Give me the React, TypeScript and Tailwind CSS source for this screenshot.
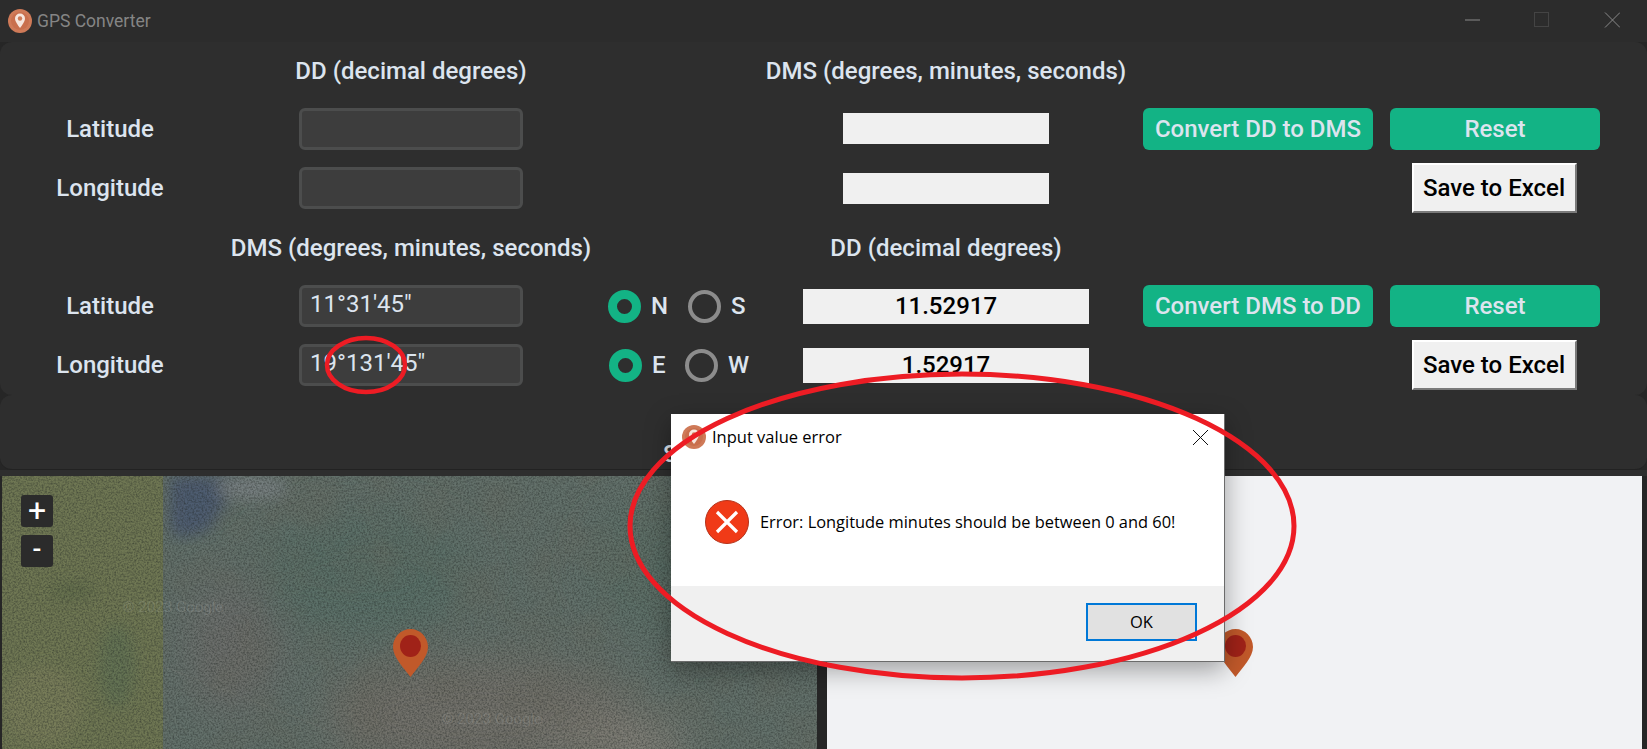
const rowCols =
  "grid grid-cols-[220px_382px_201px_286px_284px_227px] grid-rows-[30px_22px_42px_17px_42px] items-center";

function AppLogo({ className }: { className: string }) {
  return (
    <svg viewBox="0 0 24 24" className={className}>
      <circle cx="12" cy="12" r="12" fill="#cf7a58" />
      <circle cx="12" cy="12" r="9" fill="#c96f4d" />
      <path d="M12 4.5a5 5 0 0 0-5 5c0 3.6 5 9.5 5 9.5s5-5.9 5-9.5a5 5 0 0 0-5-5z" fill="#f6e6de" />
      <circle cx="12" cy="9.5" r="2.2" fill="#cf7a58" />
    </svg>
  );
}

function MapPin() {
  return (
    <svg viewBox="0 0 35 48" className="w-[35px] h-[48px]">
      <path d="M17.5 0C8 0 0 8 0 18c0 10 10 20 17.5 30C25 38 35 28 35 18 35 8 27 0 17.5 0z" fill="#c1592a" />
      <ellipse cx="17.5" cy="17" rx="10.5" ry="11" fill="#a02218" />
    </svg>
  );
}

function Heading({ children }: { children: string }) {
  return (
    <div className="flex justify-center whitespace-nowrap text-[24px] leading-[30px] font-medium text-[#dce4ee]">
      {children}
    </div>
  );
}

function Label({ children }: { children: string }) {
  return <div className="text-center text-[24px] font-medium text-[#dce4ee]">{children}</div>;
}

function Field({ value }: { value?: string }) {
  return (
    <div className="mx-auto w-[224px] h-[42px] rounded-md border-[3px] border-[#4c4d4d] bg-[#3d3d3d] pl-[8px] text-[24px] leading-[33px] text-[#dce4ee]">
      {value}
    </div>
  );
}

function GreenButton({ children, className }: { children: string; className: string }) {
  return (
    <button className={`block h-[42px] rounded-md bg-[#13b385] text-[24px] font-medium text-[#dce4ee] ${className}`}>
      {children}
    </button>
  );
}

function SaveButton() {
  return (
    <button className="mx-auto block w-[165px] h-[50px] bg-[#f0f0f0] border-2 border-t-white border-l-white border-r-[#7a7a7a] border-b-[#7a7a7a] text-[24px] font-medium text-black whitespace-nowrap">
      Save to Excel
    </button>
  );
}

function Radio({ label, on, className }: { label: string; on?: boolean; className: string }) {
  return (
    <div className={`flex items-center gap-[10px] ${className}`}>
      <span
        className={
          on
            ? "w-[33px] h-[33px] rounded-full border-[9.5px] border-[#13b385]"
            : "w-[33px] h-[33px] rounded-full border-[4px] border-[#8c8c8c]"
        }
      />
      <span className="text-[24px] font-medium text-[#dce4ee]">{label}</span>
    </div>
  );
}

function Satellite() {
  return (
    <svg viewBox="0 0 815 273" preserveAspectRatio="none" className="w-full h-full">
      <defs>
        <filter id="grain" x="0" y="0" width="100%" height="100%" colorInterpolationFilters="sRGB">
          <feTurbulence type="fractalNoise" baseFrequency="0.55" numOctaves="3" seed="8" />
          <feColorMatrix values="0 0 0 0 0.12  0 0 0 0 0.14  0 0 0 0 0.13  0 0 0 0.9 -0.32" />
        </filter>
        <filter id="mottle" x="0" y="0" width="100%" height="100%" colorInterpolationFilters="sRGB">
          <feTurbulence type="fractalNoise" baseFrequency="0.018" numOctaves="3" seed="21" />
          <feColorMatrix values="0 0 0 0 0.42  0 0 0 0 0.42  0 0 0 0 0.38  0 0 0 1.6 -0.62" />
        </filter>
        <filter id="soft">
          <feGaussianBlur stdDeviation="22" />
        </filter>
        <filter id="soft2">
          <feGaussianBlur stdDeviation="7" />
        </filter>
      </defs>
      <rect width="815" height="273" fill="#63716b" />
      <g filter="url(#soft)">
        <ellipse cx="480" cy="240" rx="160" ry="60" fill="#72716a" />
        <ellipse cx="700" cy="90" rx="110" ry="70" fill="#5b7067" />
        <ellipse cx="360" cy="100" rx="110" ry="60" fill="#5a7067" />
        <ellipse cx="620" cy="270" rx="70" ry="30" fill="#817f77" />
        <ellipse cx="230" cy="170" rx="50" ry="70" fill="#6c6e6c" />
      </g>
      <rect width="815" height="273" filter="url(#mottle)" opacity="0.5" />
      <g filter="url(#soft2)">
        <path d="M168 0H240L215 40L205 55L175 62L168 50Z" fill="#4d5c70" />
        <ellipse cx="250" cy="12" rx="36" ry="12" fill="#777f80" />
      </g>
      <rect width="161" height="273" fill="#6f7753" />
      <g filter="url(#soft2)">
        <ellipse cx="115" cy="190" rx="18" ry="42" fill="#647252" />
        <ellipse cx="70" cy="115" rx="24" ry="8" fill="#626d4b" />
        <ellipse cx="40" cy="230" rx="40" ry="40" fill="#777c58" />
      </g>
      <path d="M160 190L420 290" stroke="#7d8078" strokeWidth="1" fill="none" opacity="0.4" />
      <rect width="815" height="273" filter="url(#grain)" />
    </svg>
  );
}

export default function App() {
  return (
    <div className="relative w-[1647px] h-[749px] overflow-hidden bg-[#262626] font-['Roboto',sans-serif]">
      {/* title bar */}
      <div className="h-[42px] bg-[#2c2c2c] flex items-center pl-[8px] pr-[27px]">
        <AppLogo className="w-[24px] h-[24px]" />
        <span className="ml-[5px] text-[17.5px] text-[#858585]">GPS Converter</span>
        <svg viewBox="0 0 155 16" className="ml-auto w-[155px] h-[16px] -mt-[3px]" fill="none">
          <path d="M0 8H15" stroke="#8a8a8a" />
          <rect x="69.5" y="0.5" width="14" height="14" stroke="#444" />
          <path d="M140 0.5L155 15.5M155 0.5L140 15.5" stroke="#888" />
        </svg>
      </div>

      {/* converter panel */}
      <div className="h-[353px] rounded-[12px] bg-[#2e2e2e] pt-[14px]">
        <div className={rowCols}>
          <div />
          <Heading>DD (decimal degrees)</Heading>
          <div />
          <Heading>DMS (degrees, minutes, seconds)</Heading>
          <div />
          <div />

          <div className="col-span-6" />

          <Label>Latitude</Label>
          <Field />
          <div />
          <div className="mx-auto w-[206px] h-[31px] mb-[1px] bg-[#f0f0f0]" />
          <div className="pl-[54px]">
            <GreenButton className="w-[230px]">Convert DD to DMS</GreenButton>
          </div>
          <div className="pl-[17px]">
            <GreenButton className="w-[210px]">Reset</GreenButton>
          </div>

          <div className="col-span-6" />

          <Label>Longitude</Label>
          <Field />
          <div />
          <div className="mx-auto w-[206px] h-[31px] bg-[#f0f0f0]" />
          <div />
          <div className="pl-[15px]">
            <SaveButton />
          </div>
        </div>

        <div className={`${rowCols} mt-[24px]`}>
          <div />
          <Heading>DMS (degrees, minutes, seconds)</Heading>
          <div />
          <Heading>DD (decimal degrees)</Heading>
          <div />
          <div />

          <div className="col-span-6" />

          <Label>Latitude</Label>
          <Field value={`11°31'45"`} />
          <div className="flex items-center pl-[6px]">
            <Radio label="N" on className="w-[80px]" />
            <Radio label="S" className="" />
          </div>
          <div className="h-[35px] bg-[#f0f0f0] text-center text-[24px] leading-[35px] font-medium text-black">11.52917</div>
          <div className="pl-[54px]">
            <GreenButton className="w-[230px]">Convert DMS to DD</GreenButton>
          </div>
          <div className="pl-[17px]">
            <GreenButton className="w-[210px]">Reset</GreenButton>
          </div>

          <div className="col-span-6" />

          <Label>Longitude</Label>
          <Field value={`19°131'45"`} />
          <div className="flex items-center pl-[7px]">
            <Radio label="E" on className="w-[76px]" />
            <Radio label="W" className="" />
          </div>
          <div className="h-[35px] bg-[#f0f0f0] text-center text-[24px] leading-[35px] font-medium text-black">1.52917</div>
          <div />
          <div className="pl-[15px]">
            <SaveButton />
          </div>
        </div>
      </div>

      {/* show-on-map strip, mostly behind the dialog */}
      <div className="h-[75px] rounded-[12px] bg-[#2e2e2e] border-b border-[#222] pl-[663px] pt-[47px] text-[24px] leading-[24px] font-medium text-[#dce4ee]">
        S
      </div>

      {/* maps */}
      <div className="h-[6px] bg-[#2e2e2e]" />
      <div className="flex h-[273px] pl-[2px] pr-[5px] gap-[10px]">
        <div className="relative w-[815px] overflow-hidden">
          <Satellite />
          <div className="absolute left-[19px] top-[19px] flex flex-col gap-[8px]">
            <div className="w-[32px] h-[32px] rounded-[3px] bg-[#2b2b2b] text-white text-center text-[32px] leading-[30px]">+</div>
            <div className="w-[32px] h-[32px] rounded-[3px] bg-[#2b2b2b] text-white text-center text-[26px] leading-[28px] font-medium">-</div>
          </div>
          <div className="absolute left-[391px] top-[153px]">
            <MapPin />
          </div>
          <span className="absolute left-[121px] top-[120px] text-[15px] text-white/10">© 2023 Google</span>
          <span className="absolute left-[440px] top-[232px] text-[15px] text-white/10">© 2023 Google</span>
        </div>
        <div className="relative flex-1 bg-[#f1f2f4]">
          <div className="absolute left-[391px] top-[153px]">
            <MapPin />
          </div>
        </div>
      </div>

      {/* error dialog */}
      <div className="absolute left-[671px] top-[414px] w-[554px] h-[248px] flex flex-col bg-white border-r border-b border-[#6b6b6b] shadow-[0_8px_24px_rgba(0,0,0,0.35)] font-['Open_Sans',sans-serif] text-black">
        <div className="flex items-center h-[46px] pl-[11px] pr-[16px]">
          <AppLogo className="w-[24px] h-[24px]" />
          <span className="ml-[6px] text-[16.5px]">Input value error</span>
          <svg viewBox="0 0 15 15" className="ml-auto w-[15px] h-[15px]" fill="none">
            <path d="M0 0L15 15M15 0L0 15" stroke="#111" />
          </svg>
        </div>
        <div className="flex-1 flex items-center pl-[34px] pb-[2px]">
          <svg viewBox="0 0 44 44" className="w-[44px] h-[44px]">
            <circle cx="22" cy="22" r="21.5" fill="#f03a17" stroke="#b5321a" />
            <path d="M12 12L32 32M32 12L12 32" stroke="#fff" strokeWidth="3.2" />
          </svg>
          <span className="ml-[11px] text-[16.4px] whitespace-nowrap">Error: Longitude minutes should be between 0 and 60!</span>
        </div>
        <div className="h-[75px] bg-[#f0f0f0] flex justify-end items-start pt-[17px] pr-[27px]">
          <button className="w-[111px] h-[38px] bg-[#e1e1e1] border-2 border-[#0078d7] text-[16.5px]">OK</button>
        </div>
      </div>

      {/* red hand annotations */}
      <svg viewBox="0 0 1647 749" className="absolute inset-0 w-[1647px] h-[749px] pointer-events-none" fill="none">
        <ellipse cx="366" cy="365" rx="39" ry="27" stroke="#ed1c24" strokeWidth="4.5" />
        <ellipse cx="962" cy="526" rx="332" ry="152" stroke="#ed1c24" strokeWidth="5" />
      </svg>
    </div>
  );
}
